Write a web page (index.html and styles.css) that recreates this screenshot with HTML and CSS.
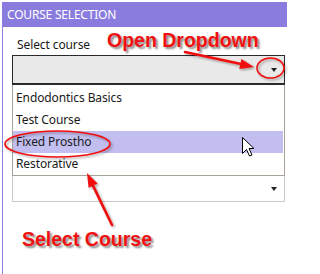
FILE: index.html
```html
<!DOCTYPE html>
<html>
<head>
<meta charset="utf-8">
<link rel="stylesheet" href="styles.css">
</head>
<body>
<div class="panel">
  <div class="header">COURSE SELECTION</div>
  <div class="content">
    <div class="label">Select course</div>
    <div class="combo open">
      <span class="caret"></span>
    </div>
    <ul class="list">
      <li>Endodontics Basics</li>
      <li>Test Course</li>
      <li class="hover">Fixed Prostho</li>
      <li>Restorative</li>
    </ul>
    <div class="combo second">
      <span class="caret"></span>
    </div>
  </div>
</div>

<svg class="marks" width="291" height="274" viewBox="0 0 291 274">
  <defs>
    <filter id="sh" x="-20%" y="-20%" width="140%" height="140%">
      <feDropShadow dx="1.5" dy="1.5" stdDeviation="1" flood-color="#000" flood-opacity="0.35"/>
    </filter>
  </defs>
  <g filter="url(#sh)" fill="none" stroke="#f01010" stroke-width="1.6">
    <ellipse cx="270.5" cy="68" rx="13.5" ry="10"/>
    <ellipse cx="57.5" cy="144" rx="52.5" ry="13"/>
  </g>
  <g filter="url(#sh)">
    <line x1="185" y1="52" x2="241" y2="64" stroke="#f01010" stroke-width="2.6" stroke-linecap="round"/>
    <polygon points="254,67 241.4,59.1 239.2,68.9" fill="#f01010"/>
    <line x1="112" y1="225" x2="93" y2="185.6" stroke="#f01010" stroke-width="2.6" stroke-linecap="round"/>
    <polygon points="87,173 97.6,183.4 88.6,187.8" fill="#f01010"/>
  </g>
  <path class="cursor" d="M242.5,137.5 L242.5,153.5 L246.5,149.5 L249.5,156 L252,155 L249,148.5 L254,148.5 Z" fill="#fff" stroke="#000" stroke-width="1" stroke-linejoin="miter"/>
</svg>

<div class="note note-open">Open Dropdown</div>
<div class="note note-select">Select Course</div>
</body>
</html>
```

FILE: styles.css
```css
html, body {
  margin: 0;
  padding: 0;
  background: #ffffff;
}
body {
  width: 291px;
  height: 274px;
  position: relative;
  overflow: hidden;
  font-family: "Noto Sans", "Open Sans", sans-serif;
}
.panel {
  margin: 2px 0 0 2px;
  width: 285px;
  height: 272px;
  border-left: 1px solid #8c7fe0;
  box-sizing: border-box;
}
.header {
  margin-left: -1px;
  height: 25px;
  background: #8a7cdf;
  color: #ffffff;
  font-size: 12px;
  line-height: 25px;
  padding-left: 5px;
  letter-spacing: -0.2px;
}
.content {
  padding: 0 2px 0 9px;
}
.label {
  font-size: 12px;
  line-height: 16px;
  color: #1a1a1a;
  padding: 10px 0 0 5px;
  height: 18px;
  letter-spacing: -0.1px;
}
.combo {
  position: relative;
  box-sizing: border-box;
  width: 273px;
  display: flex;
  align-items: center;
  justify-content: flex-end;
  padding-right: 7px;
}
.combo.open {
  height: 30px;
  background: #e9e9e9;
  border: 1px solid #2a2a2a;
  border-bottom-width: 2px;
}
.combo.second {
  height: 26px;
  background: #ffffff;
  border: 1px solid #c9c9c9;
  border-top: none;
}
.caret {
  width: 0;
  height: 0;
  border-left: 3.5px solid transparent;
  border-right: 3.5px solid transparent;
  border-top: 4px solid #222;
}
.list {
  list-style: none;
  margin: 0;
  padding: 2px 1px 0 0;
  width: 273px;
  box-sizing: border-box;
  border: 1px solid #a8a298;
  border-top: none;
}
.list li {
  height: 22px;
  line-height: 22px;
  font-size: 12px;
  color: #1a1a1a;
  padding-left: 3px;
  letter-spacing: -0.1px;
}
.list li.hover {
  background: #c2bef0;
}
.marks {
  position: absolute;
  left: 0;
  top: 0;
}
.note {
  position: absolute;
  font-family: "Liberation Sans", Arial, sans-serif;
  font-weight: bold;
  font-size: 19.5px;
  line-height: 20px;
  color: #f01010;
  text-shadow: 2px 2px 2px rgba(0, 0, 0, 0.45);
  white-space: nowrap;
}
.note-open {
  left: 107px;
  top: 30px;
}
.note-select {
  left: 22px;
  top: 229px;
}
```
